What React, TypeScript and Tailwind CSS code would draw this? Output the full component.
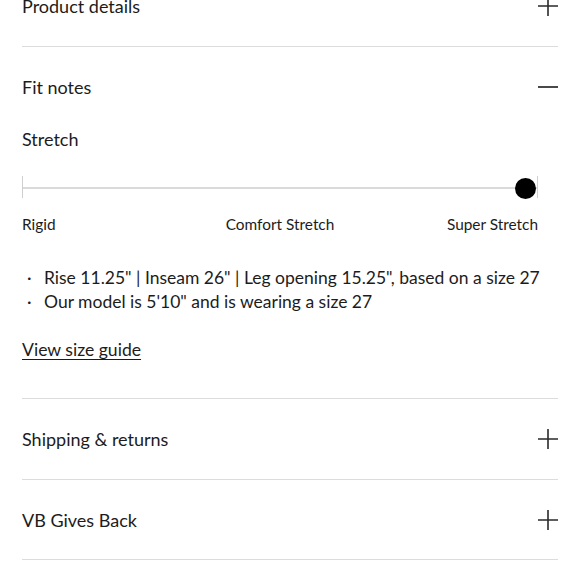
const font = { fontFamily: 'Lato, "Noto Sans", sans-serif' }

function PlusIcon() {
  return (
    <svg width="20" height="20" viewBox="0 0 20 20" className="shrink-0 text-[#2a2a2a]">
      <path d="M0 10H20M10 0V20" stroke="currentColor" strokeWidth="1.6" />
    </svg>
  )
}

function MinusIcon() {
  return (
    <svg width="20" height="20" viewBox="0 0 20 20" className="shrink-0 text-[#2a2a2a]">
      <path d="M0 10H20" stroke="currentColor" strokeWidth="1.7" />
    </svg>
  )
}

function Row({ title, last = false }: { title: string; last?: boolean }) {
  return (
    <div
      className={
        last
          ? 'flex h-[80px] items-center justify-between border-b border-[#dcdcdc]'
          : 'flex h-[81px] items-center justify-between border-b border-[#dcdcdc]'
      }
    >
      <span className="text-[18px] leading-6 text-[#1c1c1c]">{title}</span>
      <PlusIcon />
    </div>
  )
}

export default function App() {
  return (
    <div className="min-h-screen overflow-hidden bg-white" style={font}>
      <div className="-mt-[34px] px-[22px]">
        <Row title="Product details" />

        {/* Fit notes – expanded */}
        <div className="border-b border-[#dcdcdc] pb-[36px]">
          <div className="flex h-[80px] items-center justify-between">
            <span className="text-[18px] leading-6 text-[#1c1c1c]">Fit notes</span>
            <MinusIcon />
          </div>

          <p className="text-[18px] leading-6 text-[#1c1c1c]">Stretch</p>

          <div className="relative mt-[25px] mr-[20px] h-[24px]">
            <div className="absolute left-0 right-0 top-[11px] h-[2px] bg-[#dadada]" />
            <div className="absolute left-0 top-0 h-[22px] w-[1px] bg-[#cfcfcf]" />
            <div className="absolute right-0 top-0 h-[22px] w-[1px] bg-[#cfcfcf]" />
            <div className="absolute right-[2px] top-[2px] h-[21px] w-[21px] rounded-full bg-black" />
          </div>

          <div className="mt-[14px] mr-[20px] grid grid-cols-[1fr_auto_1fr] text-[15.4px] leading-5 text-[#1c1c1c]">
            <span>Rigid</span>
            <span>Comfort Stretch</span>
            <span className="justify-self-end">Super Stretch</span>
          </div>

          <ul className="mt-[32px] text-[17.5px] leading-[24px] text-[#1c1c1c]">
            <li className="flex">
              <span className="w-[22px] pl-[5px]">·</span>
              <span>Rise 11.25" | Inseam 26" | Leg opening 15.25", based on a size 27</span>
            </li>
            <li className="flex">
              <span className="w-[22px] pl-[5px]">·</span>
              <span>Our model is 5'10" and is wearing a size 27</span>
            </li>
          </ul>

          <a
            href="#"
            className="mt-[24px] block w-fit text-[17.6px] leading-6 text-[#1c1c1c] underline decoration-1 underline-offset-[3px]"
          >
            View size guide
          </a>
        </div>

        <Row title="Shipping & returns" />
        <Row title="VB Gives Back" last />
      </div>
    </div>
  )
}
